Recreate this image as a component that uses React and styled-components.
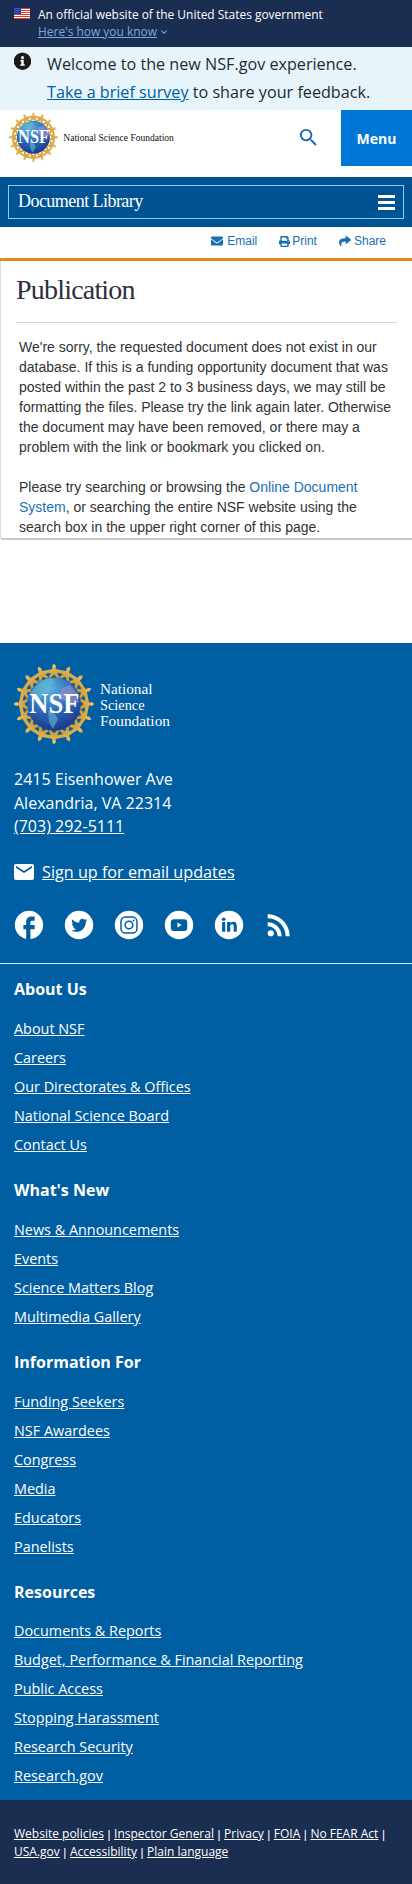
import React from "react";
import styled, { createGlobalStyle } from "styled-components";
import { FaEnvelope, FaPrint, FaShare } from "react-icons/fa";
import { MdSearch, MdMail, MdFacebook, MdRssFeed, MdExpandMore } from "react-icons/md";

const GlobalStyle = createGlobalStyle`
  * { box-sizing: border-box; }
  body { margin: 0; background: #fff; font-family: "Open Sans", sans-serif; }
  h1, h2, p, ul { margin: 0; padding: 0; font-weight: inherit; }
  ul { list-style: none; }
  svg { display: block; flex: none; }
`;

const Page = styled.div`
  width: 412px;
  min-height: 1884px;
  overflow: hidden;
`;

const GovBanner = styled.div`
  display: flex;
  gap: 8px;
  height: 47px;
  padding: 6px 14px 0;
  background: #1a2e51;
  color: #fff;
  font-size: 11.95px;
  line-height: 17px;
  svg.flag { margin-top: 2px; }
`;

const BannerLink = styled.a`
  display: flex;
  align-items: center;
  color: #75a9dc;
  span { text-decoration: underline; }
  svg { margin-left: 1px; }
`;

const Alert = styled.div`
  display: flex;
  gap: 16px;
  height: 63px;
  padding: 3px 14px 0;
  background: #e7f5fa;
  color: #1b2b33;
  font-size: 16.16px;
  line-height: 28px;
  white-space: nowrap;
  a { color: #005ea2; text-decoration: underline; }
`;

const Header = styled.header`
  display: flex;
  height: 67px;
  padding-left: 8px;
  background: #fff;
  svg.logo { margin-top: 1px; }
`;

const SearchButton = styled.div`
  margin: 16px 21px 0 auto;
  color: #1169b8;
`;

const MenuButton = styled.div`
  display: grid;
  place-items: center;
  width: 71px;
  height: 56px;
  padding-top: 1px;
  background: #0076d6;
  color: #fff;
  font-size: 14px;
  font-weight: 700;
`;

const LibraryBar = styled.div`
  height: 50px;
  padding: 8px;
  background: #005393;
`;

const LibraryToggle = styled.div`
  display: flex;
  align-items: center;
  justify-content: space-between;
  height: 34px;
  padding: 0 8px 0 9px;
  border: 1px solid #8ccbf5;
  color: #fff;
  font-family: "Liberation Serif", serif;
  font-size: 18px;
  line-height: 20px;
  letter-spacing: -0.55px;
  span:first-child { margin-top: -2px; }
`;

const Burger = styled.span`
  display: grid;
  gap: 3px;
  i { width: 17px; height: 3px; background: #fff; }
`;

const ShareBar = styled.div`
  display: flex;
  justify-content: flex-end;
  gap: 22px;
  height: 34px;
  padding: 0 26px 3px 0;
  border-bottom: 3px solid #dd8e12;
  color: #1770b3;
  font-family: "Liberation Sans", sans-serif;
  font-size: 12px;
`;

const ShareItem = styled.a`
  display: flex;
  align-items: center;
  gap: ${(p) => p.$gap}px;
`;

const Panel = styled.main`
  height: 279px;
  padding: 12px 15px 0;
  border-bottom: 2px solid #c9c9c9;
  border-left: 1px solid #ddd;
  border-bottom-left-radius: 3px;
`;

const Title = styled.h1`
  height: 50px;
  border-bottom: 1px solid #d5d5d5;
  color: #2e2e3e;
  font-family: "Liberation Serif", serif;
  font-size: 28px;
  line-height: 34px;
  letter-spacing: -0.8px;
`;

const Copy = styled.p`
  margin: ${(p) => (p.$first ? 14 : 20)}px 0 0 3px;
  color: #333;
  font-family: "Liberation Sans", sans-serif;
  font-size: 14px;
  line-height: 20px;
  white-space: nowrap;
  a { color: #1770b8; }
`;

const Footer = styled.footer`
  height: 1157px;
  margin-top: 103px;
  background: #005ea2;
  color: #fff;
`;

const Contact = styled.section`
  height: 321px;
  padding: 20px 14px 0;
  border-bottom: 1px solid #d9ecfa;
  font-size: 16px;
`;

const Address = styled.p`
  margin-top: 23px;
  line-height: 23.6px;
  a { text-decoration: underline; }
`;

const Signup = styled.div`
  display: flex;
  align-items: center;
  gap: 6px;
  height: 24px;
  margin: 21px 0 0 -2px;
  a { font-size: 16.2px; text-decoration: underline; }
`;

const Socials = styled.div`
  display: flex;
  gap: 16px;
  margin: 24px 0 0 -2px;
`;

const Group = styled.section`
  padding: ${(p) => p.$top}px 14px 0;
`;

const GroupTitle = styled.h2`
  margin-bottom: ${(p) => p.$gap}px;
  font-size: 16px;
  font-weight: 700;
  line-height: 22px;
`;

const LinkItem = styled.li`
  height: 29px;
  font-size: 14.4px;
  line-height: 29px;
  text-decoration: underline;
`;

const Legal = styled.nav`
  height: 84px;
  padding: 25px 14px 0;
  background: #1a2e51;
  color: #fff;
  font-size: 12px;
  line-height: 18px;
  white-space: nowrap;
  a { text-decoration: underline; }
`;

const Separator = styled.span`
  margin: 0 -1.1px;
  font-size: 11px;
  font-weight: 600;
  line-height: 1;
`;

const Flag = () => (
  <svg className="flag" width="16" height="11" viewBox="0 0 16 11">
    <rect width="16" height="11" fill="#fff" />
    {[0, 2, 4, 6, 8, 10].map((y) => (
      <rect key={y} y={y} width="16" height="1" fill="#db3e1f" />
    ))}
    <rect width="7" height="6" fill="#1e33b1" />
    {[1, 3, 5].map((x) => [1, 3, 5].map((y) => (
      <circle key={`${x}-${y}`} cx={x} cy={y - 0.3} r="0.4" fill="#fff" />
    )))}
  </svg>
);

const Info = () => (
  <svg width="17" height="20" viewBox="0 0 17 20">
    <circle cx="8.5" cy="11.2" r="8.7" fill="#1b1b1b" />
    <circle cx="8.5" cy="7.4" r="1.5" fill="#fff" />
    <path d="M6.5 9.8h3.2v4.4h1v1.6H6.3v-1.6h1v-2.8h-.8z" fill="#fff" />
  </svg>
);

/* One gold figure of the ring, head outward, arms along the circle. */
const figure = "M0-40.5l2 2.6-.4 2.9 5.6 1.2-.4 2.2-3.6.6 2.3 4.2-2.3.9-3.2-3.6-3.2 3.6-2.3-.9 2.3-4.2-3.6-.6-.4-2.2 5.6-1.2-.4-2.9z";

const Emblem = ({ id }) => (
  <g>
    <defs>
      <radialGradient id={`${id}-globe`} cx="42%" cy="22%" r="80%">
        <stop offset="0" stopColor="#5fb2de" />
        <stop offset="0.5" stopColor="#2f6fc0" />
        <stop offset="1" stopColor="#1b3586" />
      </radialGradient>
      <linearGradient id={`${id}-gold`} x1="0" y1="0" x2="0" y2="1">
        <stop offset="0" stopColor="#e3c36c" />
        <stop offset="1" stopColor="#d4962a" />
      </linearGradient>
    </defs>
    <circle r="32" fill="none" stroke="#c3b070" strokeWidth="1.4" />
    {Array.from({ length: 16 }, (_, i) => (
      <path key={i} d={figure} fill={`url(#${id}-gold)`} transform={`rotate(${i * 22.5})`} />
    ))}
    <circle r="26.5" fill={`url(#${id}-globe)`} />
    <path d="M-19-17l8-7 9-2 3 5-5 3-1 6-7 4-3 7-6-2-3-8zM-6 7l7 3 3 5-5 10-4-7z" fill="#62bdd0" opacity="0.6" />
    <path d="M8-16l8-3 7 8 2 9-7 4-7-5-6-3z" fill="#9a91ce" opacity="0.65" />
    <text x="0.3" y="9" textAnchor="middle" textLength="50" lengthAdjust="spacingAndGlyphs" fontFamily="Liberation Serif, serif" fontWeight="700" fontSize="29" fill="#fff">NSF</text>
  </g>
);

const HeaderLogo = () => (
  <svg className="logo" width="170" height="53" viewBox="0 0 170 53">
    <g transform="translate(25.4 26.3) scale(.62)"><Emblem id="head" /></g>
    <text x="55.3" y="29.5" textLength="110.5" lengthAdjust="spacingAndGlyphs" fontFamily="Liberation Serif, serif" fontSize="10" fill="#111">National Science Foundation</text>
  </svg>
);

const FooterLogo = () => (
  <svg width="160" height="82" viewBox="0 0 160 82">
    <g transform="translate(40 41)"><Emblem id="foot" /></g>
    <g fontFamily="Liberation Serif, serif" fontSize="15.5" fill="#fff">
      <text x="86" y="31" textLength="52.5" lengthAdjust="spacingAndGlyphs">National</text>
      <text x="86" y="46.5" textLength="44.5" lengthAdjust="spacingAndGlyphs">Science</text>
      <text x="86" y="62.5" textLength="70" lengthAdjust="spacingAndGlyphs">Foundation</text>
    </g>
  </svg>
);

const Disc = ({ children }) => (
  <svg width="34" height="34" viewBox="0 0 34 34">
    <circle cx="17" cy="17" r="14.2" fill="#fff" />
    {children}
  </svg>
);

const BLUE = "#005ea2";

const Twitter = () => (
  <Disc>
    <path transform="translate(9.3 9.3) scale(.67)" fill={BLUE} d="M23.95 4.57a10 10 0 01-2.82.77 4.96 4.96 0 002.16-2.72c-.95.55-2 .96-3.13 1.18a4.92 4.92 0 00-8.38 4.48C7.69 8.1 4.07 6.13 1.64 3.16a4.9 4.9 0 001.52 6.57 4.9 4.9 0 01-2.23-.61v.06a4.92 4.92 0 003.95 4.83 5 5 0 01-2.21.08 4.94 4.94 0 004.6 3.42A9.87 9.87 0 010 19.54a14 14 0 007.55 2.21c9.05 0 14-7.5 14-13.98 0-.21 0-.42-.02-.63a9.94 9.94 0 002.42-2.57z" />
  </Disc>
);

const Instagram = () => (
  <Disc>
    <g fill="none" stroke={BLUE} strokeWidth="1.5">
      <rect x="9" y="9" width="16" height="16" rx="4.6" />
      <circle cx="17" cy="17" r="3.8" />
    </g>
    <circle cx="21.5" cy="12.6" r="1" fill={BLUE} />
  </Disc>
);

const YouTube = () => (
  <Disc>
    <rect x="8.8" y="11.2" width="16.4" height="11.8" rx="3" fill={BLUE} />
    <path d="M15.4 14.6v5l4.3-2.5z" fill="#fff" />
  </Disc>
);

const LinkedIn = () => (
  <Disc>
    <circle cx="11.7" cy="11.3" r="1.8" fill={BLUE} />
    <path fill={BLUE} d="M10.1 14h3.1v9.8h-3.1zM15.1 14h3v1.4c.5-.9 1.6-1.7 3.1-1.7 3 0 3.6 2 3.6 4.6v5.5h-3.1V19c0-1.2 0-2.7-1.6-2.7s-1.9 1.3-1.9 2.6v4.9h-3.1z" />
  </Disc>
);

const groups = [
  { title: "About Us", top: 14, gap: 14, links: ["About NSF", "Careers", "Our Directorates & Offices", "National Science Board", "Contact Us"] },
  { title: "What's New", top: 20, gap: 14, links: ["News & Announcements", "Events", "Science Matters Blog", "Multimedia Gallery"] },
  { title: "Information For", top: 20, gap: 14, links: ["Funding Seekers", "NSF Awardees", "Congress", "Media", "Educators", "Panelists"] },
  { title: "Resources", top: 20, gap: 13, links: ["Documents & Reports", "Budget, Performance & Financial Reporting", "Public Access", "Stopping Harassment", "Research Security", "Research.gov"] },
];

const Bar = () => <Separator>|</Separator>;

export default function App() {
  return (
    <Page>
      <GlobalStyle />
      <GovBanner>
        <Flag />
        <div>
          <p>An official website of the United States government</p>
          <BannerLink><span>Here's how you know</span><MdExpandMore size={12} /></BannerLink>
        </div>
      </GovBanner>
      <Alert>
        <Info />
        <p>
          Welcome to the new NSF.gov experience.<br />
          <a>Take a brief survey</a> to share your feedback.
        </p>
      </Alert>
      <Header>
        <HeaderLogo />
        <SearchButton><MdSearch size={23} /></SearchButton>
        <MenuButton>Menu</MenuButton>
      </Header>
      <LibraryBar>
        <LibraryToggle><span>Document Library</span><Burger><i /><i /><i /></Burger></LibraryToggle>
      </LibraryBar>
      <ShareBar>
        <ShareItem $gap={4}><FaEnvelope size={12} />Email</ShareItem>
        <ShareItem $gap={2}><FaPrint size={11} />Print</ShareItem>
        <ShareItem $gap={3}><FaShare size={12} />Share</ShareItem>
      </ShareBar>
      <Panel>
        <Title>Publication</Title>
        <Copy $first>
          We're sorry, the requested document does not exist in our<br />
          database. If this is a funding opportunity document that was<br />
          posted within the past 2 to 3 business days, we may still be<br />
          formatting the files. Please try the link again later. Otherwise<br />
          the document may have been removed, or there may a<br />
          problem with the link or bookmark you clicked on.
        </Copy>
        <Copy>
          Please try searching or browsing the <a>Online Document<br />
          System</a>, or searching the entire NSF website using the<br />
          search box in the upper right corner of this page.
        </Copy>
      </Panel>
      <Footer>
        <Contact>
          <FooterLogo />
          <Address>
            2415 Eisenhower Ave<br />
            Alexandria, VA 22314<br />
            <a>(703) 292-5111</a>
          </Address>
          <Signup><MdMail size={24} /><a>Sign up for email updates</a></Signup>
          <Socials>
            <MdFacebook size={34} />
            <Twitter />
            <Instagram />
            <YouTube />
            <LinkedIn />
            <MdRssFeed size={34} />
          </Socials>
        </Contact>
        {groups.map((g) => (
          <Group key={g.title} $top={g.top}>
            <GroupTitle $gap={g.gap}>{g.title}</GroupTitle>
            <ul>{g.links.map((l) => <LinkItem key={l}>{l}</LinkItem>)}</ul>
          </Group>
        ))}
      </Footer>
      <Legal>
        <a>Website policies</a> <Bar /> <a>Inspector General</a> <Bar /> <a>Privacy</a> <Bar /> <a>FOIA</a> <Bar /> <a>No FEAR Act</a> <Bar /><br />
        <a>USA.gov</a> <Bar /> <a>Accessibility</a> <Bar /> <a>Plain language</a>
      </Legal>
    </Page>
  );
}
